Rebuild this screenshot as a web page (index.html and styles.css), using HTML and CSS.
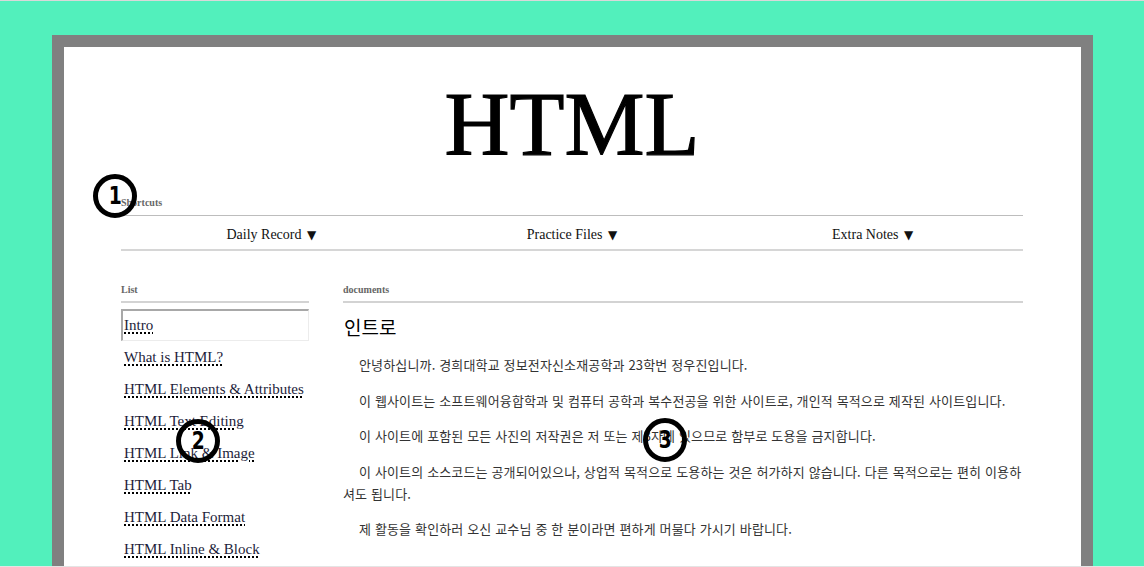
FILE: index.html
```html
<!DOCTYPE html>
<html lang="ko">
<head>
<meta charset="utf-8">
<title>HTML</title>
<link rel="stylesheet" href="styles.css">
</head>
<body>
<div class="screen">
  <div class="frame">
    <div class="page">
      <h1 class="title">HTML</h1>
      <div class="section-label label-shortcuts">Shortcuts</div>
      <nav class="shortcuts">
        <div class="nav-item">Daily Record <span class="caret">▼</span></div>
        <div class="nav-item">Practice Files <span class="caret">▼</span></div>
        <div class="nav-item">Extra Notes <span class="caret">▼</span></div>
      </nav>
      <div class="main">
        <aside class="sidebar">
          <div class="section-label label-list">List</div>
          <ul class="toc">
            <li class="toc-item active"><a class="toc-link">Intro</a></li>
            <li class="toc-item"><a class="toc-link">What is HTML?</a></li>
            <li class="toc-item"><a class="toc-link">HTML Elements &amp; Attributes</a></li>
            <li class="toc-item"><a class="toc-link">HTML Text Editing</a></li>
            <li class="toc-item"><a class="toc-link">HTML Link &amp; Image</a></li>
            <li class="toc-item"><a class="toc-link">HTML Tab</a></li>
            <li class="toc-item"><a class="toc-link">HTML Data Format</a></li>
            <li class="toc-item"><a class="toc-link">HTML Inline &amp; Block</a></li>
          </ul>
        </aside>
        <section class="docs">
          <div class="section-label label-list">documents</div>
          <h2 class="doc-title">인트로</h2>
          <p class="doc-p">안녕하십니까. 경희대학교 정보전자신소재공학과 23학번 정우진입니다.</p>
          <p class="doc-p">이 웹사이트는 소프트웨어융합학과 및 컴퓨터 공학과 복수전공을 위한 사이트로, 개인적 목적으로 제작된 사이트입니다.</p>
          <p class="doc-p">이 사이트에 포함된 모든 사진의 저작권은 저 또는 제3자에 있으므로 함부로 도용을 금지합니다.</p>
          <p class="doc-p">이 사이트의 소스코드는 공개되어있으나, 상업적 목적으로 도용하는 것은 허가하지 않습니다. 다른 목적으로는 편히 이용하셔도 됩니다.</p>
          <p class="doc-p">제 활동을 확인하러 오신 교수님 중 한 분이라면 편하게 머물다 가시기 바랍니다.</p>
        </section>
      </div>
    </div>
  </div>
  <span class="marker marker-1"><span class="marker-digit">1</span></span>
  <span class="marker marker-2"><span class="marker-digit">2</span></span>
  <span class="marker marker-3"><span class="marker-digit">3</span></span>
</div>
</body>
</html>
```

FILE: styles.css
```css
html, body {
  margin: 0;
  padding: 0;
}

body {
  background: #52f0bc;
  overflow: hidden;
}

.screen {
  position: relative;
  height: 565px;
  overflow: hidden;
  background: #52f0bc;
  border-top: 1px solid #d9d9d9;
  border-bottom: 1px solid #e4e4e4;
}

.frame {
  margin: 34px 0 0 52px;
  width: 1017px;
  border: 12px solid #808080;
  border-bottom: none;
  height: 600px;
  background: #fff;
}

.page {
  background: #fff;
  padding: 28px 58px 0 57px;
  font-family: "Liberation Serif", "Times New Roman", serif;
  color: #000;
}

.title {
  margin: 0;
  font-size: 90px;
  font-weight: normal;
  line-height: 100px;
  text-align: center;
  -webkit-text-stroke: 1.2px #000;
}

.section-label {
  font-size: 10px;
  line-height: 12px;
  font-weight: bold;
  color: #666;
  padding-bottom: 6px;
}

.label-shortcuts {
  margin-top: 22px;
  border-bottom: 1px solid #bdbdbd;
}

.label-list {
  border-bottom: 2px solid #d3d3d3;
  padding-bottom: 5px;
}

.shortcuts {
  display: grid;
  grid-template-columns: 1fr 1fr 1fr;
  padding: 11px 0 6px;
  border-bottom: 2px solid #d6d6d6;
}

.nav-item {
  text-align: center;
  font-size: 14px;
  line-height: 16px;
  color: #111;
}

.caret {
  font-family: "DejaVu Sans", sans-serif;
  font-size: 12px;
  margin-left: 2px;
}

.main {
  display: flex;
  gap: 34px;
  margin-top: 33px;
}

.sidebar {
  width: 188px;
  flex: none;
}

.toc {
  list-style: none;
  margin: 6px 0 0;
  padding: 0;
}

.toc-item {
  height: 32px;
  line-height: 32px;
  padding-left: 3px;
  font-size: 15px;
  box-sizing: border-box;
}

.toc-item.active {
  border-top: 2px solid #a8a8a8;
  border-left: 2px solid #a8a8a8;
  border-right: 1px solid #ececec;
  border-bottom: 1px solid #ececec;
  line-height: 28px;
  padding-left: 1px;
}

.toc-link {
  color: #1d1d3a;
  text-decoration: underline dotted #000;
  text-decoration-thickness: 2px;
  text-underline-offset: 2px;
}

.docs {
  flex: 1;
  min-width: 0;
}

.doc-title {
  margin: 12px 0 0 1px;
  font-family: "Noto Sans CJK KR", sans-serif;
  font-size: 19px;
  line-height: 24px;
  font-weight: normal;
  color: #000;
}

.doc-p {
  margin: 15px 0 13.5px;
  font-family: "Noto Sans CJK KR", sans-serif;
  font-size: 13px;
  letter-spacing: 0.15px;
  line-height: 22px;
  text-indent: 16px;
  color: #333;
}

.doc-p + .doc-p {
  margin-top: 13.5px;
}

.marker {
  position: absolute;
  width: 34px;
  height: 34px;
  border: 5px solid #000;
  border-radius: 50%;
  font-family: "DejaVu Sans", sans-serif;
  font-weight: bold;
  font-size: 24px;
  line-height: 34px;
  text-align: center;
  color: #000;
}

.marker-digit {
  display: inline-block;
  transform: scaleX(0.78);
}

.marker-1 { left: 93px; top: 173px; }
.marker-2 { left: 176px; top: 418px; }
.marker-3 { left: 643px; top: 417px; }
```
